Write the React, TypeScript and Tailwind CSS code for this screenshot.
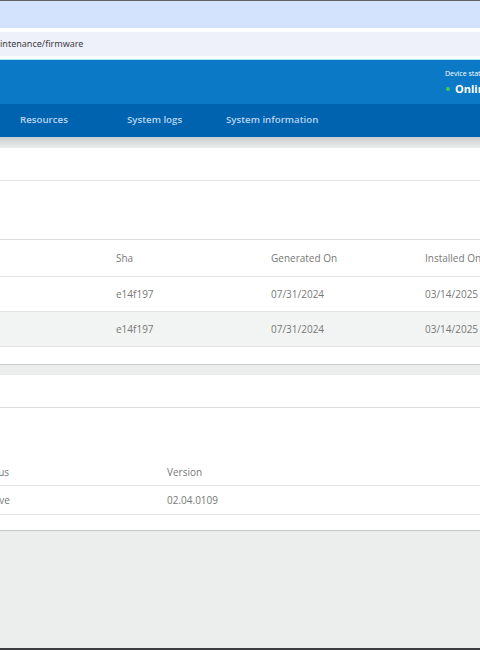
const font = { fontFamily: '"Open Sans", "Noto Sans", sans-serif' };

const firmwareRows = [
  { sha: "e14f197", generated: "07/31/2024", installed: "03/14/2025" },
  { sha: "e14f197", generated: "07/31/2024", installed: "03/14/2025" },
];

const navItems = [
  { label: "Resources", width: "w-[107px]" },
  { label: "System logs", width: "w-[99px]" },
  { label: "System information", width: "w-auto" },
];

export default function App() {
  return (
    <div className="w-[480px] h-[650px] overflow-hidden flex flex-col bg-[#eceeed]" style={font}>
      {/* browser chrome */}
      <div className="h-px bg-[#5f6368]" />
      <div className="h-[27px] bg-[#d3e3fd]" />
      <div className="h-[4px] bg-white" />
      <div className="h-[24px] bg-[#eef1f9] flex items-center">
        <span className="text-[9px] text-[#3c4043]" style={{ fontFamily: '"Noto Sans", sans-serif' }}>
          intenance/firmware
        </span>
      </div>
      <div className="h-[3px] bg-white" />
      <div className="h-px bg-[#a6e3ee]" />

      {/* app header */}
      <div className="h-[44px] bg-[#0b79c5] flex justify-end">
        <div className="w-[35px] flex flex-col pt-[9px]">
          <span className="text-[7px] leading-[9px] text-white whitespace-nowrap">Device status</span>
          <div className="flex items-center gap-[5px] mt-[3px] pl-[1px]">
            <span className="w-[4px] h-[4px] rounded-full bg-[#3fce4f] shrink-0" />
            <span className="text-[11px] font-bold text-white whitespace-nowrap">Online</span>
          </div>
        </div>
      </div>
      <nav className="h-[33px] bg-[#0063b0] flex items-center pl-[20px]">
        {navItems.map((item) => (
          <span
            key={item.label}
            className={`${item.width} text-[9.7px] font-semibold text-[#b9d5ef] whitespace-nowrap`}
          >
            {item.label}
          </span>
        ))}
      </nav>
      <div className="h-[11px] bg-gradient-to-b from-[#c9cdcd] to-[#eceeed]" />

      {/* installed firmware card */}
      <section className="bg-white border-b border-[#cdcdcd]">
        <div className="h-[33px] border-b border-[#e3e3e3]" />
        <div className="h-[59px] border-b border-[#dcdcdc]" />
        <div className="text-[10px] text-[#777]">
          <div className="grid grid-cols-[116px_155px_154px_1fr] h-[37px] items-center border-b border-[#e3e3e3]">
            <span />
            <span>Sha</span>
            <span>Generated On</span>
            <span className="whitespace-nowrap">Installed On</span>
          </div>
          {firmwareRows.map((row, i) => (
            <div
              key={i}
              className={`grid grid-cols-[116px_155px_154px_1fr] h-[35px] items-center border-b border-[#e3e3e3] ${
                i % 2 === 1 ? "bg-[#f2f4f3]" : "bg-white"
              }`}
            >
              <span />
              <span>{row.sha}</span>
              <span>{row.generated}</span>
              <span>{row.installed}</span>
            </div>
          ))}
        </div>
        <div className="h-[17px]" />
      </section>

      <div className="h-[10px]" />

      {/* modules card */}
      <section className="bg-white border-b border-[#c8c8c8]">
        <div className="h-[33px] border-b border-[#dcdcdc]" />
        <div className="h-[51px]" />
        <div className="text-[10px] text-[#777] overflow-hidden">
          <div className="grid grid-cols-[167px_1fr] h-[27px] items-center border-b border-[#e3e3e3]">
            <span className="-ml-[20px]">Status</span>
            <span>Version</span>
          </div>
          <div className="grid grid-cols-[167px_1fr] h-[29px] items-center border-b border-[#e3e3e3]">
            <span className="-ml-[18px]">Active</span>
            <span>02.04.0109</span>
          </div>
        </div>
        <div className="h-[15px]" />
      </section>

      <div className="flex-1" />
      <div className="h-[2px] bg-[#3b3d40]" />
    </div>
  );
}
